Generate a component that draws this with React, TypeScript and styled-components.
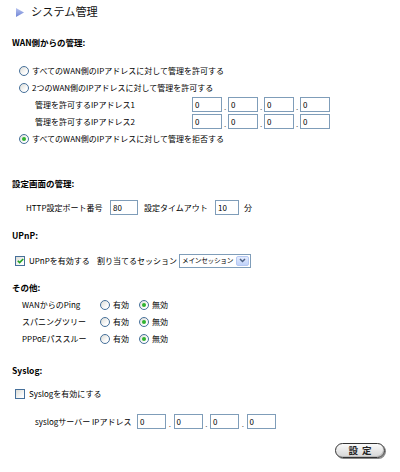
import React from "react";
import styled, { createGlobalStyle } from "styled-components";

const Global = createGlobalStyle`
  html, body { margin: 0; padding: 0; background: #fff; }
  body { font-family: "Noto Sans CJK JP", "Noto Sans", sans-serif; color: #000; }
`;

const Page = styled.div`
  width: 400px;
  height: 472px;
  font-size: 8px;
  line-height: 1;
  overflow: hidden;
`;

const Title = styled.div`
  height: 24px;
  display: flex;
  align-items: center;
  padding-left: 16px;
  gap: 7px;
  font-size: 11.2px;
  color: #111;
`;

const Heading = styled.div<{ $top: number }>`
  margin-top: ${(p) => p.$top}px;
  height: 12px;
  display: flex;
  align-items: center;
  padding-left: 12px;
  font-weight: bold;
  font-size: 8.5px;
`;

const Row = styled.div<{ $top?: number; $indent: number }>`
  margin-top: ${(p) => p.$top ?? 0}px;
  height: 17px;
  display: flex;
  align-items: center;
  padding-left: ${(p) => p.$indent}px;
  white-space: nowrap;
`;

const Group = styled.div`
  margin-top: 3px;
`;

const Label = styled.span<{ $w?: number; $gap?: number }>`
  display: inline-block;
  ${(p) => (p.$w ? `width: ${p.$w}px;` : "")}
  margin-right: ${(p) => p.$gap ?? 0}px;
`;

const RadioCircle = styled.span<{ $on?: boolean; $gap?: number }>`
  box-sizing: border-box;
  width: 10px;
  height: 10px;
  border-radius: 50%;
  border: 1px solid #46709a;
  background: linear-gradient(135deg, #dcdcd6 0%, #fdfdfd 70%);
  display: inline-flex;
  align-items: center;
  justify-content: center;
  margin-right: ${(p) => p.$gap ?? 3}px;
  flex: none;
  &::after {
    content: "";
    display: ${(p) => (p.$on ? "block" : "none")};
    width: 4px;
    height: 4px;
    border-radius: 50%;
    background: #2fb32f;
  }
`;

const CheckBox = styled.span<{ $gap?: number }>`
  box-sizing: border-box;
  width: 10px;
  height: 10px;
  border: 1px solid #46709a;
  background: linear-gradient(135deg, #dcdcd6 0%, #fdfdfd 80%);
  display: inline-flex;
  align-items: center;
  justify-content: center;
  margin-right: ${(p) => p.$gap ?? 4}px;
  flex: none;
`;

const IpBox = styled.span<{ $w?: number }>`
  box-sizing: border-box;
  display: inline-flex;
  align-items: center;
  width: ${(p) => p.$w ?? 30}px;
  height: 15px;
  border: 1px solid #7f9db9;
  background: #fff;
  padding-left: 2px;
  font-size: 8px;
  flex: none;
`;

const Dot = styled.span<{ $w?: number }>`
  display: inline-flex;
  justify-content: center;
  align-items: flex-end;
  width: ${(p) => p.$w ?? 6}px;
  height: 12px;
  font-size: 8px;
  color: #555;
`;

const Select = styled.span`
  box-sizing: border-box;
  display: inline-flex;
  align-items: center;
  width: 72px;
  height: 14px;
  border: 1px solid #7f9db9;
  background: #fff;
  padding: 1px;
  margin-left: 2px;
`;

const SelectText = styled.span`
  flex: 1;
  padding-left: 1px;
  font-size: 6.7px;
  letter-spacing: -0.3px;
  white-space: nowrap;
`;

const SelectArrow = styled.span`
  box-sizing: border-box;
  width: 13px;
  height: 10px;
  border: 1px solid #b5c8f2;
  border-radius: 2px;
  background: linear-gradient(#e3ebfd, #c0d2f9);
  display: inline-flex;
  align-items: center;
  justify-content: center;
  flex: none;
`;

const Buttons = styled.div`
  margin-top: 13px;
  display: flex;
  justify-content: flex-end;
  padding-right: 15px;
`;

const SetButton = styled.span`
  box-sizing: border-box;
  width: 50px;
  height: 15px;
  border-radius: 8px;
  border: 1px solid #333;
  background: linear-gradient(#fafafa, #d6d6d6);
  box-shadow: 1px 1px 0 #888, inset -1px -1px 0 #bbb;
  display: inline-flex;
  align-items: center;
  justify-content: center;
  font-size: 9.5px;
  font-weight: bold;
  letter-spacing: 4px;
  padding-left: 4px;
  color: #222;
`;

const Ip = ({ w, pitch }: { w?: number; pitch?: number }) => {
  const dw = (pitch ?? 36) - (w ?? 30);
  return (
    <>
      <IpBox $w={w}>0</IpBox>
      <Dot $w={dw}>.</Dot>
      <IpBox $w={w}>0</IpBox>
      <Dot $w={dw}>.</Dot>
      <IpBox $w={w}>0</IpBox>
      <Dot $w={dw}>.</Dot>
      <IpBox $w={w}>0</IpBox>
    </>
  );
};

const Check = () => (
  <svg width="7" height="6" viewBox="0 0 7 6">
    <path d="M0.8 2.8 L2.6 4.6 L6.2 1" stroke="#21a121" strokeWidth="1.6" fill="none" />
  </svg>
);

const Chevron = () => (
  <svg width="7" height="5" viewBox="0 0 7 5">
    <path d="M1 1 L3.5 3.5 L6 1" stroke="#4d6185" strokeWidth="1.5" fill="none" />
  </svg>
);

const Triangle = () => (
  <svg width="8" height="9" viewBox="0 0 8 9">
    <defs>
      <linearGradient id="tg" x1="0" y1="0" x2="0" y2="1">
        <stop offset="0" stopColor="#b7c3ef" />
        <stop offset="1" stopColor="#6f84d6" />
      </linearGradient>
    </defs>
    <path d="M0 0 L8 4.5 L0 9 Z" fill="url(#tg)" />
  </svg>
);

const OnOff = ({ label }: { label: string }) => (
  <Row $indent={22}>
    <Label $w={78}>{label}</Label>
    <RadioCircle />
    <Label $w={26}>有効</Label>
    <RadioCircle $on />
    <Label>無効</Label>
  </Row>
);

export default function App() {
  return (
    <Page>
      <Global />
      <Title>
        <Triangle />
        <span>システム管理</span>
      </Title>

      <Heading $top={12}>WAN側からの管理:</Heading>
      <Row $top={14} $indent={19}>
        <RadioCircle />
        <Label>すべてのWAN側のIPアドレスに対して管理を許可する</Label>
      </Row>
      <Row $indent={19}>
        <RadioCircle />
        <Label>2つのWAN側のIPアドレスに対して管理を許可する</Label>
      </Row>
      <Row $indent={35}>
        <Label $w={157}>管理を許可するIPアドレス1</Label>
        <Ip />
      </Row>
      <Row $indent={35}>
        <Label $w={157}>管理を許可するIPアドレス2</Label>
        <Ip />
      </Row>
      <Row $indent={19}>
        <RadioCircle $on />
        <Label>すべてのWAN側のIPアドレスに対して管理を拒否する</Label>
      </Row>

      <Heading $top={30}>設定画面の管理:</Heading>
      <Row $top={10} $indent={26}>
        <Label $w={84}>HTTP設定ポート番号</Label>
        <IpBox $w={28}>80</IpBox>
        <Label $w={6} />
        <Label $w={71}>設定タイムアウト</Label>
        <IpBox $w={24}>10</IpBox>
        <Label $w={5} />
        <Label>分</Label>
      </Row>

      <Heading $top={13}>UPnP:</Heading>
      <Row $top={11} $indent={15}>
        <CheckBox>
          <Check />
        </CheckBox>
        <Label $w={68}>UPnPを有効する</Label>
        <Label $w={80}>割り当てるセッション</Label>
        <Select>
          <SelectText>メインセッション</SelectText>
          <SelectArrow>
            <Chevron />
          </SelectArrow>
        </Select>
      </Row>

      <Heading $top={12}>その他:</Heading>
      <Group>
        <OnOff label="WANからのPing" />
        <OnOff label="スパニングツリー" />
        <OnOff label="PPPoEパススルー" />
      </Group>

      <Heading $top={17}>Syslog:</Heading>
      <Row $top={9} $indent={15}>
        <CheckBox />
        <Label>Syslogを有効にする</Label>
      </Row>
      <Row $top={11} $indent={35}>
        <Label $w={102}>syslogサーバー IPアドレス</Label>
        <Ip w={29} pitch={36.5} />
      </Row>

      <Buttons>
        <SetButton>設定</SetButton>
      </Buttons>
    </Page>
  );
}
